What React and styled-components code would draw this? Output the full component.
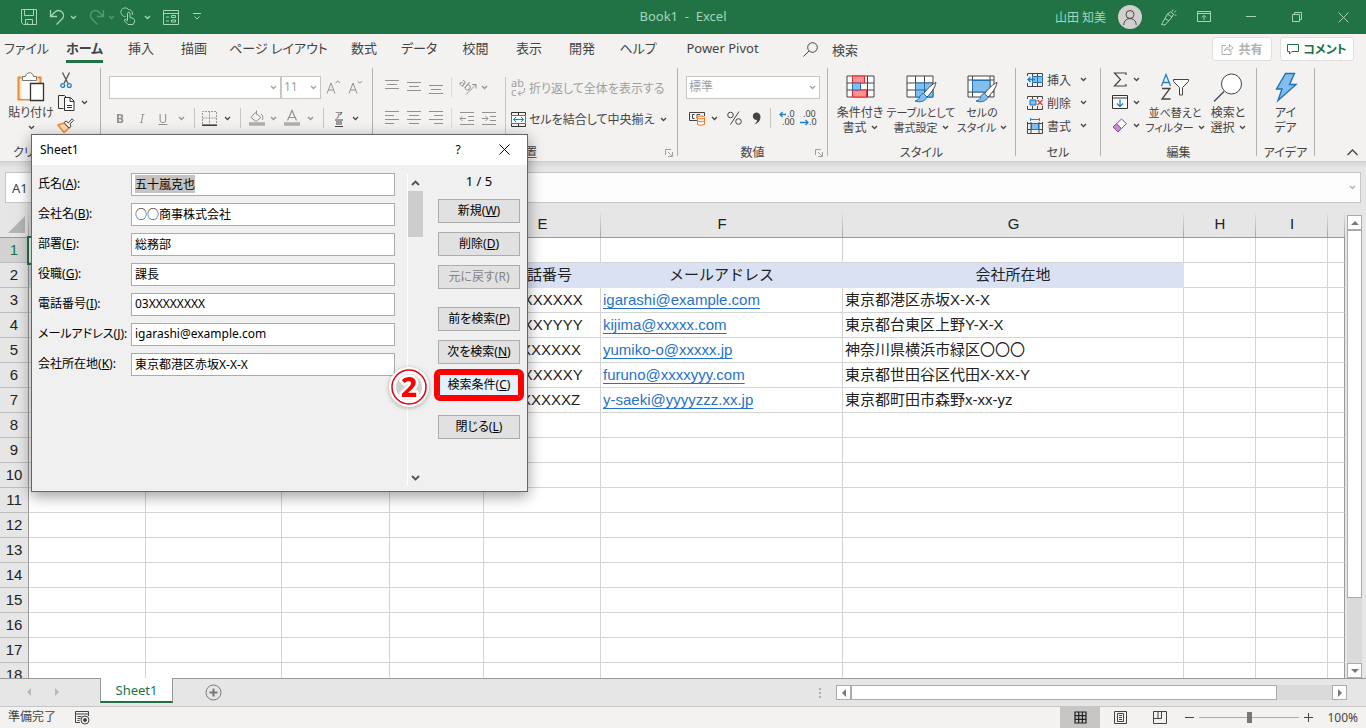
import { useEffect, useRef } from 'react'
import styled, { createGlobalStyle } from 'styled-components'

const GlobalStyle = createGlobalStyle`
  *, *::before, *::after { box-sizing: border-box; }
  body {
    margin: 0;
    overflow: hidden;
    font-family: "Noto Sans", "Noto Sans CJK JP", sans-serif;
    font-feature-settings: "palt";
    font-size: 12px;
    color: #444;
  }
  button, input, select {
    font: inherit;
    font-feature-settings: inherit;
    color: inherit;
  }
  button {
    padding: 0;
    border: 0;
    background: none;
  }
  svg { display: block; flex: none; overflow: visible; }
`

const Window = styled.div`
  position: relative;
  display: flex;
  flex-direction: column;
  height: 100vh;
  background: #e6e6e6;
`

/* ---------- title bar ---------- */

const TitleBar = styled.header`
  display: grid;
  grid-template-columns: 1fr auto 1fr;
  align-items: center;
  height: 34px;
  background: #217346;
  color: #a6d5ba;
`
const QuickAccess = styled.div`
  display: flex;
  align-items: center;
  padding-left: 14px;
`
const WindowTitle = styled.div`
  padding-bottom: 2px;
  font-size: 13px;
  line-height: 30px;
  white-space: pre;
`
const Account = styled.div`
  display: flex;
  align-items: center;
  justify-content: flex-end;
`
const UserName = styled.span`
  margin-right: 12px;
`
const Avatar = styled.span`
  display: flex;
  align-items: center;
  justify-content: center;
  width: 24px;
  height: 24px;
  margin-right: 14px;
  border-radius: 50%;
  background: #d2d0ce;
  color: #444;
`
const Slot = styled.button`
  display: flex;
  flex: none;
  align-items: center;
  justify-content: center;
  width: ${props => props.$w}px;
  height: 24px;
  margin-left: ${props => props.$ml || 0}px;
  opacity: ${props => (props.$dim ? 0.4 : 1)};
`

/* ---------- tabs ---------- */

const TabRow = styled.nav`
  display: flex;
  align-items: center;
  height: 32px;
  padding-bottom: 2px;
  background: #f3f2f1;
  font-size: 13px;
`
const Tab = styled.button`
  flex: none;
  width: ${props => props.$w}px;
  height: 28px;
  white-space: nowrap;
  font-weight: ${props => (props.$active ? 700 : 400)};
  span {
    display: inline-block;
    height: 28px;
    line-height: 27px;
    border-bottom: 3px solid ${props => (props.$active ? '#217346' : 'transparent')};
  }
`
const SearchTab = styled.button`
  display: flex;
  align-items: center;
  gap: 14px;
  margin-left: 22px;
`
const TabActions = styled.div`
  display: flex;
  gap: 8px;
  margin-left: auto;
  padding-right: 12px;
`
const ActionButton = styled.button`
  display: flex;
  align-items: center;
  justify-content: center;
  gap: 4px;
  width: ${props => props.$w}px;
  height: 24px;
  border: 1px solid #e1dfdd;
  border-radius: 3px;
  background: #fff;
  color: ${props => props.$color};
  font-size: 12px;
  font-weight: 700;
`

/* ---------- ribbon ---------- */

const Ribbon = styled.section`
  display: flex;
  height: 96px;
  padding: 2px 0 5px;
  border-bottom: 1px solid #d2d0ce;
  background: #f3f2f1;
`
const Group = styled.div`
  display: flex;
  flex-direction: column;
  flex: none;
  width: ${props => props.$w}px;
  border-right: 1px solid #b3b0ad;
`
const GroupBody = styled.div`
  display: flex;
  flex: 1;
  min-height: 0;
  padding: 0 0 0 ${props => props.$pl || 0}px;
`
const GroupLabel = styled.div`
  position: relative;
  height: 10px;
  line-height: 14px;
  text-align: center;
  white-space: nowrap;
  svg {
    position: absolute;
    right: 4px;
    top: 3px;
  }
`
const Collapse = styled.button`
  margin: auto 8px 0 auto;
`
const Stack = styled.div`
  display: flex;
  flex-direction: column;
  padding-top: ${props => props.$pt || 0}px;
`
const ToolRow = styled.div`
  display: flex;
  align-items: center;
  height: ${props => props.$h || 32}px;
  opacity: ${props => (props.$dim ? 0.55 : 1)};
`
const Split = styled.i`
  align-self: center;
  flex: none;
  width: 1px;
  height: ${props => props.$h || 20}px;
  margin: 0 ${props => props.$m}px;
  background: #c8c6c4;
`
const Combo = styled.div`
  display: flex;
  align-items: center;
  width: ${props => props.$w}px;
  height: 23px;
  padding: 0 3px 0 2px;
  border: 1px solid #c8c6c4;
  background: #fff;
  color: #a19f9d;
  select {
    flex: 1;
    min-width: 0;
    padding: 0;
    border: 0;
    background: none;
    appearance: none;
    font-size: 12px;
    line-height: 20px;
  }
`
const TextTool = styled.button`
  display: flex;
  align-items: center;
  gap: 3px;
  height: ${props => props.$h || 23}px;
  white-space: nowrap;
  color: ${props => (props.$off ? '#a19f9d' : 'inherit')};
  > span { width: ${props => (props.$tw ? props.$tw + 'px' : 'auto')}; text-align: left; }
`
const BigTool = styled.button`
  display: flex;
  flex-direction: column;
  align-items: center;
  flex: none;
  width: ${props => props.$w}px;
  height: 76px;
  padding-top: 2px;
  line-height: 15px;
  white-space: nowrap;
  font-size: ${props => (props.$small ? 11 : 12)}px;
  > svg { height: 34px; margin-bottom: 1px; }
`
const LabelLine = styled.span`
  display: flex;
  align-items: center;
  gap: 4px;
  height: 15px;
`

/* ---------- formula bar ---------- */

const FormulaBar = styled.div`
  display: flex;
  gap: 80px;
  height: 49px;
  padding: 10px 5px 8px;
  background: linear-gradient(#d6d6d6, #e6e6e6 6px);
`
const NameBox = styled.input`
  width: 110px;
  padding: 0 6px;
  border: 1px solid #c6c6c6;
  background: #fff;
  font-size: 13px;
  outline: 0;
`
const FormulaField = styled.div`
  display: flex;
  flex: 1;
  align-items: center;
  padding-right: 4px;
  border: 1px solid #c6c6c6;
  background: #fdfdfd;
  color: #b0b0b0;
  input {
    flex: 1;
    border: 0;
    background: none;
    outline: 0;
  }
`

/* ---------- sheet ---------- */

const SheetArea = styled.main`
  display: flex;
  flex: 1;
  min-height: 0;
`
const GridBox = styled.div`
  flex: 1;
  min-width: 0;
  overflow: hidden;
`
const Grid = styled.table`
  width: 100%;
  table-layout: fixed;
  border-spacing: 0;
  font-family: "Liberation Sans", "Noto Sans CJK JP", sans-serif;
  font-feature-settings: normal;
  font-size: 15px;
  line-height: 20px;
  color: #222;
`
const ColHead = styled.th`
  height: 27px;
  padding: 0;
  border-bottom: 1px solid #999;
  background: linear-gradient(#e6e6e6, #a6a6a6) right / 1px 100% no-repeat #e6e6e6;
  font-weight: 400;
  svg { margin-left: 8px; }
`
const RowHead = styled.th`
  height: 25px;
  padding: 0;
  border-right: 1px solid #999;
  border-bottom: 1px solid #bdbdbd;
  background: ${props => (props.$active ? '#d2d2d2' : '#e6e6e6')};
  color: ${props => (props.$active ? '#217346' : '#222')};
  font-weight: 400;
`
const Cell = styled.td`
  height: 25px;
  padding: 0 2px;
  border-right: 1px solid ${props => (props.$head ? '#d9e1f2' : '#d4d4d4')};
  border-bottom: 1px solid ${props => (props.$head ? '#d9e1f2' : '#d4d4d4')};
  background: ${props => (props.$head ? '#d9e1f2' : '#fff')};
  text-align: ${props => (props.$head ? 'center' : 'left')};
  outline: ${props => (props.$selected ? '2px solid #217346' : '0')};
  white-space: nowrap;
  overflow: hidden;
  &:last-child { border-right-color: #999; }
  a {
    color: #2672c8;
    text-underline-offset: 3px;
    text-decoration-skip-ink: none;
  }
`
const VScroll = styled.div`
  display: flex;
  flex-direction: column;
  width: 21px;
  padding: 4px 4px 0 2px;
`
const HScroll = styled.div`
  display: flex;
  width: 511px;
  height: 15px;
  margin: 6px 19px 0 15px;
`
const ScrollButton = styled.button`
  display: flex;
  flex: none;
  align-items: center;
  justify-content: center;
  width: 15px;
  height: 15px;
  border: 1px solid #ababab;
  background: #fff;
  color: #777;
`
const Track = styled.div`
  display: flex;
  flex: 1;
  flex-direction: ${props => (props.$row ? 'row' : 'column')};
  background: #dadada;
`
const Thumb = styled.div`
  flex: 0 0 ${props => props.$size};
  border: 1px solid #ababab;
  background: #fff;
`

/* ---------- bottom bars ---------- */

const SheetTabs = styled.div`
  display: flex;
  flex: none;
  height: 28px;
  border-top: 1px solid #999;
  color: #b8b8b8;
`
const TabArrows = styled.div`
  display: flex;
  align-items: center;
  gap: 20px;
  width: 100px;
  padding: 0 0 2px 26px;
`
const SheetTab = styled.button`
  width: 73px;
  height: 25px;
  margin-top: -1px;
  border: solid #999;
  border-width: 0 1px;
  border-bottom: 2px solid #217346;
  background: #fff;
  color: #217346;
  font-size: 13px;
  line-height: 24px;
`
const AddSheet = styled.button`
  margin-left: 32px;
  color: #777;
`
const Grip = styled.span`
  display: flex;
  flex-direction: column;
  justify-content: center;
  gap: 2px;
  margin-left: auto;
  i {
    width: 2px;
    height: 2px;
    background: #b0b0b0;
  }
`
const StatusBar = styled.footer`
  display: flex;
  flex: none;
  align-items: center;
  height: 22px;
  padding: 0 8px;
  border-top: 1px solid #c6c6c6;
  background: #f3f2f1;
  > span { line-height: 18px; padding-bottom: 2px; }
  > svg { margin-left: 19px; }
`
const Views = styled.div`
  display: flex;
  margin-left: auto;
`
const ViewButton = styled.button`
  display: flex;
  align-items: center;
  justify-content: center;
  width: 40px;
  height: 21px;
  background: ${props => (props.$active ? '#c8c6c4' : 'none')};
`
const Zoom = styled.div`
  display: flex;
  align-items: center;
  gap: 5px;
  padding-left: 5px;
  input {
    width: 100px;
    height: 12px;
    margin: 0;
    appearance: none;
    background: linear-gradient(#ababab, #ababab) center / 100% 1px no-repeat;
  }
  input::-webkit-slider-thumb {
    appearance: none;
    width: 5px;
    height: 11px;
    background: #777;
  }
  output {
    width: 34px;
    margin-left: 6px;
    text-align: right;
  }
`

/* ---------- data form dialog ---------- */

const Dialog = styled.div`
  position: absolute;
  left: 31px;
  top: 134px;
  display: flex;
  flex-direction: column;
  width: 497px;
  height: 358px;
  border: 1px solid #666;
  background: #f0f0f0;
  color: #000;
  box-shadow: 0 4px 14px rgba(0, 0, 0, 0.4);
`
const DialogTitle = styled.div`
  display: flex;
  align-items: center;
  height: 30px;
  padding: 0 0 2px 8px;
  background: #fff;
  span { margin-right: auto; }
  button { width: 46px; height: 28px; display: grid; place-items: center; }
`
const DialogBody = styled.div`
  display: flex;
  flex: 1;
  min-height: 0;
  padding: 8px 7px 5px 6px;
`
const Fields = styled.form`
  display: flex;
  flex-direction: column;
  gap: 7px;
  width: 357px;
`
const Field = styled.div`
  display: flex;
  height: 23px;
  label {
    width: 93px;
    line-height: 21px;
    white-space: nowrap;
  }
  input {
    flex: 1;
    min-width: 0;
    padding: 0 3px 2px;
    border: 1px solid #ababab;
    border-radius: 0;
    background: #fff;
    outline: 0;
  }
  input::selection {
    background: #c4c4c4;
    color: #000;
  }
`
const RecordScroll = styled.div`
  display: flex;
  flex-direction: column;
  width: 16px;
  margin: 1px 15px 0 12px;
  border-left: 1px solid #fff;
  color: #505050;
  button { height: 17px; display: grid; place-items: center; }
  i { height: 46px; background: #cdcdcd; }
  button:last-child { margin-top: auto; }
`
const Commands = styled.div`
  display: flex;
  flex-direction: column;
  gap: 9px;
  width: 82px;
`
const Counter = styled.div`
  height: 17px;
  font-size: 13px;
  line-height: 17px;
  text-align: center;
`
const Command = styled.button`
  flex: none;
  height: 24px;
  margin-top: ${props => (props.$spaced ? 9 : 0)}px;
  padding-bottom: 2px;
  border: 1px solid #adadad;
  background: #e1e1e1;
  color: ${props => (props.disabled ? '#838383' : '#000')};
  white-space: nowrap;
  ${props => props.$marked && `
    border: 2px solid #f00;
    background: #e5f1fb;
    outline: 4px solid #f00;
    border-radius: 2px;
  `}
`
const StepBadge = styled.svg`
  position: absolute;
  left: 355px;
  top: 230px;
  filter: drop-shadow(0 1px 2px rgba(0, 0, 0, 0.3));
`

/* ---------- icons ---------- */

const Icon = ({ w = 16, h = 16, children }) => (
  <svg width={w} height={h} viewBox={`0 0 ${w} ${h}`} fill="none" stroke="currentColor" aria-hidden="true">
    {children}
  </svg>
)
const Chevron = () => <Icon w={7} h={5}><path d="M1 1l2.5 2.5L6 1" strokeWidth="1.3" /></Icon>
const Lines = ({ rows, h = 14 }) => (
  <Icon w={14} h={h}>
    {rows.map(([x1, x2, y]) => <path key={y} d={`M${x1} ${y}.5H${x2}`} />)}
  </Icon>
)
const Arrow = ({ d }) => <Icon w={8} h={8}><path d={d} fill="currentColor" stroke="none" /></Icon>

const SaveIcon = () => (
  <Icon><path d="M.5.5h15v15h-13l-2-2zM3.5.5v6h9v-6M4.5 15.5v-5h7v5M6.5 15.5v-2" /></Icon>
)
const UndoIcon = () => (
  <Icon><path d="M1.500 1v6.500h6.500M1.500 7.500L6 3c2-2 5-2 7 0s2 5 0 7l-5.500 5.500" strokeWidth="1.300" /></Icon>
)
const RedoIcon = () => (
  <Icon><path d="M14.500 1v6.500H8M14.500 7.500L10 3c-2-2-5-2-7 0s-2 5 0 7l5.500 5.500" strokeWidth="1.300" /></Icon>
)
const TouchIcon = () => (
  <Icon w={12} h={16}>
    <path d="M4.500 11.500V4.500a1.200 1.200 0 012.500 0V8.500l3 .8c1 .3 1.500 1 1.500 2V13l-1.500 2.500H5L1.500 12c-.8-1 .5-2.200 1.500-1.300l1.500 1.300M2.500 7.500A4.300 4.300 0 115.700.700c2.500 0 4.500 2.500 3.500 5.300" />
  </Icon>
)
const FormIcon = () => (
  <Icon h={15}><path d="M.5.5h15v14H.5zM.5 3.500h15M3 7h3M3 11h3M8.500 5.500h4v2h-4zM8.500 10h4v2h-4z" /></Icon>
)
const PersonIcon = () => (
  <Icon w={14} h={15}><circle cx="7" cy="4.500" r="4" /><path d="M.8 15c0-8.500 12.400-8.500 12.400 0" /></Icon>
)
const PenIcon = () => (
  <Icon w={17} h={17}><path d="M1.500 15.500l6-10.500 4.500 3-7 8zM7.500 5l3-2 3 2-1.500 3M5 9.500l4 2.500M12 2.500l.8-2M14 3.500l2-2M14.500 6h2" /></Icon>
)
const DisplayIcon = () => <Icon w={14} h={12}><path d="M.5.5h13v10H.5zM.5 2.500h13M7 9V4.500M4.800 6.500L7 4.300l2.200 2.200" /></Icon>
const SearchIcon = () => (
  <Icon w={15} h={15}><circle cx="9.500" cy="5.500" r="4.800" /><path d="M6 9L.5 14.500" /></Icon>
)
const ShareIcon = () => <Icon w={13} h={12}><path d="M5 2.500H1v9h9V8M3.500 8c.5-3 2.500-4 5-4V1.500L12 5 8.500 8V6C6.500 6 5 6.500 3.500 8z" /></Icon>
const CommentIcon = () => <Icon w={12} h={11}><path d="M.5.5h11v7H5l-2.500 2.500V7.500h-2z" /></Icon>

const PasteIcon = () => (
  <Icon w={28} h={34}>
    <path d="M4.500 7.500h-3v22h22v-22h-3" stroke="#ee8a2c" strokeWidth="2" fill="#fbe2c4" />
    <path d="M5 9h15v20H4z" fill="#fafafa" stroke="none" />
    <path d="M5.500 10.500v-4h3c.5-5 7.500-5 8 0h3v4z" fill="#fff" stroke="#777" />
    <path d="M13.500 13.500h13v17h-13z" fill="#fff" stroke="#333" strokeWidth="1.300" />
  </Icon>
)
const CutIcon = () => (
  <Icon w={12} h={16}>
    <path d="M2.500.5l5.500 11M9.500.5L4 11.500" stroke="#555" strokeWidth="1.300" />
    <circle cx="2.700" cy="13.500" r="1.900" stroke="#1e82c8" strokeWidth="1.300" />
    <circle cx="9.300" cy="13.500" r="1.900" stroke="#1e82c8" strokeWidth="1.300" />
  </Icon>
)
const CopyIcon = () => (
  <Icon w={17} h={16}>
    <path d="M5.500 13.500h-5V.5h6l2 2" stroke="#333" />
    <path d="M6.500 2.500h6l3.500 3.500v9.500H6.500zM12 3v3.500h4M9 10.500h5M9 12.500h5" stroke="#333" fill="#fff" />
  </Icon>
)
const BrushIcon = () => (
  <Icon w={18} h={15}>
    <path d="M1 7l6-2 5 5-5 4.500z" fill="#fbd9b5" stroke="#ee8a2c" strokeWidth="1.500" />
    <path d="M7 4.500l2-1.500 2.500 2L15 .8l1.500 1.500L13 6l1 2.500-2 1.500z" fill="#fff" stroke="#444" />
  </Icon>
)
const BorderIcon = () => (
  <Icon w={15} h={15}><path d="M.5 13V.5h14V13M7.500.5V13M.5 7h14" stroke="#999" strokeDasharray="2 1" /><path d="M0 14.200h15" stroke="#333" strokeWidth="1.500" /></Icon>
)
const FillIcon = () => (
  <Icon w={16} h={16}><path d="M7.500.5v4M6 2.500l6 5-5 4-5-4 4-5M12 4c2 1 2 3 1.500 6" /><path d="M0 14h16" strokeWidth="3.500" stroke="#777" /></Icon>
)
const FontColorIcon = () => (
  <Icon w={16} h={16}><path d="M3.500 10.500L8 .5l4.500 10M5 7.500h6" strokeWidth="1.200" /><path d="M0 14h16" strokeWidth="3.500" stroke="#777" /></Icon>
)
const SmallText = styled.text`
  font-size: ${props => props.$s || 9}px;
  fill: ${props => props.$c || 'currentColor'};
  stroke: none;
`
const OrientIcon = () => (
  <Icon w={17} h={15}>
    <SmallText x="-1" y="8" $s={11} transform="rotate(40 5 5)">ab</SmallText>
    <path d="M6 14.500l10-10M12 4.500h4v4" />
  </Icon>
)
const IndentIcon = ({ out }) => (
  <Icon w={14} h={13}><path d={`M0 .5h14M8 4.500h6M8 8.500h6M0 12.500h14M0 6.500h6${out ? 'M2.500 4L0 6.500 2.500 9' : 'M3.500 4L6 6.500 3.500 9'}`} /></Icon>
)
const WrapIcon = () => (
  <Icon w={15} h={17}>
    <SmallText x="0" y="7" $s={11}>ab</SmallText><SmallText x="0" y="16" $s={11}>c</SmallText>
    <path d="M13.500 8v2.500q0 3-6 3M9.500 11L7 13.500 9.500 16" />
  </Icon>
)
const MergeIcon = () => (
  <Icon w={15} h={15}>
    <path d="M.5 3V.5h14V3M7.500.5V3M.5 12v2.500h14V12M7.500 12v2.500" stroke="#333" />
    <path d="M.5 3.500h14v8H.5z" fill="#fff" stroke="#1e82c8" /><path d="M2.500 7.500h10M5 5L2.500 7.500 5 10M10 5l2.500 2.500L10 10" stroke="#1e82c8" />
  </Icon>
)
const MoneyIcon = () => (
  <Icon w={17} h={15}>
    <path d="M8 9.500H.5v-8h15V5M5.500 3.500h-2v4h2M8 7.500v-4h3" stroke="#444" />
    <path d="M8.500 6.500v7q3.500 1.500 7 0v-7" fill="#fff" stroke="#ee7a1c" /><ellipse cx="12" cy="6.500" rx="3.500" ry="1.500" fill="#fbe2c4" stroke="#ee7a1c" />
    <path d="M8.500 10q3.500 1.500 7 0" stroke="#ee7a1c" />
  </Icon>
)
const DecimalIcon = ({ more }) => (
  <Icon w={17} h={16}>
    <SmallText x={more ? 8 : 3} y="7" $s={9}>{more ? '.0' : '.00'}</SmallText>
    <SmallText x={more ? 3 : 9} y="15" $s={9}>{more ? '.00' : '.0'}</SmallText>
    <path d={more ? 'M7 4.500H.8M3.500 2L1 4.500 3.500 7' : 'M0 12.500h8M5.500 10L8 12.500 5.500 15'} stroke="#1e82c8" strokeWidth="1.300" />
  </Icon>
)
const CondIcon = () => (
  <Icon w={29} h={34}>
    <path d="M1 6h27v21H1zM1 13h27M1 20h27M6.500 6v21M14.500 6v21M21.500 6v21" fill="#fff" stroke="#444" />
    <path d="M6.500 6h12v7h-12zM6.500 20h14v7h-14z" fill="#ff8f8f" stroke="#e02828" /><path d="M6.500 13h8v7h-8z" fill="#83beec" stroke="#1e72b8" />
  </Icon>
)
const PaintBrush = () => (
  <>
    <path d="M30 12.500c-3 1-9 6-12.500 11.500l3.500 3c4-4 8-9 9-14.500z" fill="#fff" stroke="#444" />
    <path d="M17.500 23.500c-3 0-3.500 2.500-4.500 5-1 1.500-3 2.500-4 2.500 4 1.500 10 1 12-4z" fill="#83beec" stroke="#1e72b8" />
  </>
)
const TableIcon = () => (
  <Icon w={31} h={34}>
    <path d="M1 6h26v21H1zM1 13h26M1 20h26M9.500 6v21M18.500 6v21" fill="#fff" stroke="#444" />
    <path d="M9.500 13H27v14H9.500zM9.500 20H27M18.500 13v14" fill="#83beec" stroke="#1e72b8" /><PaintBrush />
  </Icon>
)
const CellStyleIcon = () => (
  <Icon w={31} h={34}>
    <path d="M1 6h26v21H1zM1 10h26M1 22h26M5.500 6v21M23 6v21" fill="#fff" stroke="#444" />
    <path d="M5.500 10.500H23V22H5.500z" fill="#83beec" stroke="#1e72b8" /><PaintBrush />
  </Icon>
)
const RowsIcon = ({ kind }) => (
  <Icon w={17} h={16}>
    {kind !== 'format' && <path d="M.5 4V1.500h15V4M5.500 1.500V4M10.500 1.500V4M.5 11v3.500h15V11M5.500 11v3.500M10.500 11v3.500" stroke="#444" />}
    {kind === 'insert' && <><path d="M5.500 4.500h10v6h-10zM10.500 4.500v6" fill="#83beec" stroke="#1e72b8" /><path d="M8 7.500H.8M3.500 5L1 7.500 3.500 10" stroke="#1e82c8" strokeWidth="1.300" /></>}
    {kind === 'delete' && <><path d="M3 5h6v5H3z" fill="#83beec" stroke="#1e72b8" /><path d="M10.500 5l5 5M15.500 5l-5 5" stroke="#e84040" strokeWidth="1.500" /></>}
    {kind === 'format' && <><path d="M.5 4v11.500h15V4M.5 11.500h15M.5 5.500h15M4 4v11.500M12 4v11.500" stroke="#444" /><path d="M4.500 5.500h7v6h-7z" fill="#83beec" stroke="#1e72b8" /><path d="M3.500 0v3M12.500 0v3M3.500 1.500h9" stroke="#1e82c8" /></>}
  </Icon>
)
const SumIcon = () => <Icon w={15} h={15}><path d="M13 3V1H1.500l6 6.500-6 6.500H13v-2" strokeWidth="1.200" /></Icon>
const FillDownIcon = () => (
  <Icon w={17} h={15}><path d="M.5.500h15v13H.5zM.5 3h15" stroke="#333" fill="#fff" /><path d="M8 4.500v7M5 8.500l3 3 3-3" stroke="#1e82c8" strokeWidth="1.300" /></Icon>
)
const EraserIcon = () => (
  <Icon w={16} h={15}><path d="M1 9l8.500-8L14.500 5.500 6 14z" fill="#fff" stroke="#9b3fae" /><path d="M1 9l3.500-3.300L9.500 10.500 6 14z" fill="#c88ad6" stroke="#9b3fae" /></Icon>
)
const SortIcon = () => (
  <Icon w={30} h={34}>
    <path d="M1.500 16L6 4.500 10.500 16M3 12.500h6" stroke="#1e82c8" strokeWidth="1.300" />
    <path d="M2 18.500h8L2 29h8.500" strokeWidth="1.300" />
    <path d="M13.500 9.500h15v2l-6 6V25h-3v-7.500l-6-6z" fill="#fff" />
  </Icon>
)
const FindIcon = () => (
  <Icon w={30} h={34}><circle cx="18.500" cy="14" r="10" fill="#fff" /><path d="M11 21.500L1 31.500" strokeWidth="1.300" /></Icon>
)
const IdeaIcon = () => (
  <Icon w={24} h={34}><path d="M11.500 3.500h9l-5 11H22L4 30.500l4-11.500H2.500z" fill="#83beec" stroke="#1e72b8" strokeWidth="1.400" /></Icon>
)
const LauncherIcon = () => <Icon w={8} h={8}><path d="M.5 6V.5H6M3 3l4 4M7.500 3v4.500H3" stroke="#a19f9d" /></Icon>
const CloseIcon = () => <Icon w={11} h={11}><path d="M.5.500l10 10M10.500.500l-10 10" /></Icon>

/* ---------- data ---------- */

const tabs = [
  ['ファイル', 53], ['ホーム', 63], ['挿入', 50], ['描画', 56], ['ページ レイアウト', 113], ['数式', 58],
  ['データ', 52], ['校閲', 61], ['表示', 46], ['開発', 60], ['ヘルプ', 52], ['Power Pivot', 117],
]
const columns = [
  ['A', 117], ['B', 136], ['C', 108], ['D', 94], ['E', 117], ['F', 242], ['G', 341], ['H', 72], ['I', 72], ['', 0],
]
const records = {
  2: ['', '氏名', '会社名', '部署', '電話番号', 'メールアドレス', '会社所在地'],
  3: ['', '', '', '', '03XXXXXXXX', 'igarashi@example.com', '東京都港区赤坂X-X-X'],
  4: ['', '', '', '', '03XXXXYYYY', 'kijima@xxxxx.com', '東京都台東区上野Y-X-X'],
  5: ['', '', '', '', '045XXXXXXX', 'yumiko-o@xxxxx.jp', '神奈川県横浜市緑区〇〇〇'],
  6: ['', '', '', '', '03XXXXXXXY', 'furuno@xxxxyyy.com', '東京都世田谷区代田X-XX-Y'],
  7: ['', '', '', '', '042XXXXXXZ', 'y-saeki@yyyyzzz.xx.jp', '東京都町田市森野x-xx-yz'],
}
const fields = [
  ['氏名', 'A', '五十嵐克也'],
  ['会社名', 'B', '○○商事株式会社'],
  ['部署', 'E', '総務部'],
  ['役職', 'G', '課長'],
  ['電話番号', 'I', '03XXXXXXXX'],
  ['メールアドレス', 'J', 'igarashi@example.com'],
  ['会社所在地', 'K', '東京都港区赤坂X-X-X'],
]
const commands = [
  { text: '新規', k: 'W' },
  { text: '削除', k: 'D' },
  { text: '元に戻す', k: 'R', off: true },
  { text: '前を検索', k: 'P', spaced: true },
  { text: '次を検索', k: 'N' },
  { text: '検索条件', k: 'C', marked: true },
  { text: '閉じる', k: 'L', spaced: true },
]

/* ---------- parts ---------- */

function Title() {
  return (
    <TitleBar>
      <QuickAccess>
        <Slot $w={30}><SaveIcon /></Slot>
        <Slot $w={26}><UndoIcon /></Slot>
        <Slot $w={6}><Chevron /></Slot>
        <Slot $w={22} $ml={10} $dim><RedoIcon /></Slot>
        <Slot $w={6} $dim><Chevron /></Slot>
        <Slot $w={22} $ml={4}><TouchIcon /></Slot>
        <Slot $w={6} $ml={4}><Chevron /></Slot>
        <Slot $w={22} $ml={10}><FormIcon /></Slot>
        <Slot $w={10} $ml={10}><Icon w={8} h={8}><path d="M0 .5h8M1.500 3.500L4 6l2.500-2.500" /></Icon></Slot>
      </QuickAccess>
      <WindowTitle>Book1  -  Excel</WindowTitle>
      <Account>
        <UserName>山田 知美</UserName>
        <Avatar><PersonIcon /></Avatar>
        <Slot $w={24}><PenIcon /></Slot>
        <Slot $w={48}><DisplayIcon /></Slot>
        <Slot $w={46}><Icon w={10} h={2}><path d="M0 .5h10" /></Icon></Slot>
        <Slot $w={46}><Icon w={10} h={10}><path d="M.5 2.500h7v7h-7zM2.500 2.500v-2h7v7h-2" /></Icon></Slot>
        <Slot $w={46}><CloseIcon /></Slot>
      </Account>
    </TitleBar>
  )
}

function Tabs() {
  return (
    <TabRow>
      {tabs.map(([name, w]) => (
        <Tab key={name} $w={w} $active={name === 'ホーム'}><span>{name}</span></Tab>
      ))}
      <SearchTab><SearchIcon />検索</SearchTab>
      <TabActions>
        <ActionButton $w={60} $color="#b3b0ad" disabled><ShareIcon />共有</ActionButton>
        <ActionButton $w={74} $color="#217346"><CommentIcon />コメント</ActionButton>
      </TabActions>
    </TabRow>
  )
}

function Big({ w, icon, lines, arrow, small }) {
  return (
    <BigTool $w={w} $small={small}>
      {icon}
      <LabelLine>{lines[0]}</LabelLine>
      <LabelLine>{lines[1]}{arrow && <Chevron />}</LabelLine>
    </BigTool>
  )
}

function RibbonBar() {
  return (
    <Ribbon>
      <Group $w={101}>
        <GroupBody $pl={6}>
          <Big w={50} icon={<PasteIcon />} lines={['貼り付け', '']} arrow />
          <Stack>
            <ToolRow $h={23}><Slot $w={20}><CutIcon /></Slot></ToolRow>
            <ToolRow $h={23}><Slot $w={20}><CopyIcon /></Slot><Slot $w={16}><Chevron /></Slot></ToolRow>
            <ToolRow $h={23}><Slot $w={20}><BrushIcon /></Slot></ToolRow>
          </Stack>
        </GroupBody>
        <GroupLabel>クリップボード</GroupLabel>
      </Group>

      <Group $w={272}>
        <GroupBody $pl={8}>
          <Stack $pt={3}>
            <ToolRow>
              <Combo $w={172}><select aria-label="フォント"><option></option></select><Chevron /></Combo>
              <Combo $w={40}><select aria-label="サイズ"><option>11</option></select><Chevron /></Combo>
              <ToolRow $dim>
                <Slot $w={24}><Icon w={14} h={14}><path d="M1 13.500L5 3l4 10.500M2.500 10h5M9.500 3L12 .800 14 3" /></Icon></Slot>
                <Slot $w={20}><Icon w={14} h={14}><path d="M1 13.500L5 3l4 10.500M2.500 10h5M9.500 1L12 3.200 14 1" /></Icon></Slot>
              </ToolRow>
            </ToolRow>
            <ToolRow $h={30}>
              <ToolRow $dim>
                <Slot $w={22}><b>B</b></Slot>
                <Slot $w={22}><em>I</em></Slot>
                <Slot $w={20}><u>U</u></Slot>
                <Slot $w={16}><Chevron /></Slot>
              </ToolRow>
              <Split $m={5} />
              <Slot $w={19}><BorderIcon /></Slot>
              <Slot $w={16}><Chevron /></Slot>
              <Split $m={5} />
              <ToolRow $dim>
                <Slot $w={21}><FillIcon /></Slot>
                <Slot $w={12}><Chevron /></Slot>
                <Slot $w={26}><FontColorIcon /></Slot>
                <Slot $w={10}><Chevron /></Slot>
              </ToolRow>
              <Split $m={8} />
              <Slot $w={14}>
                <Icon w={10} h={17}>
                  <SmallText x="1" y="8" $s={8}>ア</SmallText>
                  <path d="M1 10h8M2 12h6M2 14h6M1 16.500h8" strokeWidth="1.200" />
                </Icon>
              </Slot>
              <Slot $w={18}><Chevron /></Slot>
            </ToolRow>
          </Stack>
        </GroupBody>
        <GroupLabel>フォント</GroupLabel>
      </Group>

      <Group $w={305}>
        <GroupBody $pl={8}>
          <Stack $pt={3}>
            <ToolRow $dim>
              <Slot $w={22}><Lines rows={[[0, 14, 0], [2, 12, 4], [0, 14, 8]]} /></Slot>
              <Slot $w={22}><Lines rows={[[0, 14, 2], [2, 12, 6], [0, 14, 10]]} /></Slot>
              <Slot $w={22}><Lines rows={[[0, 14, 5], [2, 12, 9], [0, 14, 13]]} /></Slot>
              <Split $m={4} />
              <Slot $w={24}><OrientIcon /></Slot>
              <Slot $w={8}><Chevron /></Slot>
            </ToolRow>
            <ToolRow $h={30} $dim>
              <Slot $w={22}><Lines rows={[[0, 14, 0], [0, 9, 4], [0, 14, 8], [0, 9, 12]]} /></Slot>
              <Slot $w={22}><Lines rows={[[0, 14, 0], [2, 12, 4], [0, 14, 8], [2, 12, 12]]} /></Slot>
              <Slot $w={22}><Lines rows={[[0, 14, 0], [5, 14, 4], [0, 14, 8], [5, 14, 12]]} /></Slot>
              <Split $m={4} />
              <Slot $w={22}><IndentIcon out /></Slot>
              <Slot $w={22}><IndentIcon /></Slot>
            </ToolRow>
          </Stack>
          <Split $m={5} $h={60} />
          <Stack $pt={4}>
            <TextTool $h={32} $off><WrapIcon /><span>折り返して全体を表示する</span></TextTool>
            <TextTool $h={30}><MergeIcon /><span>セルを結合して中央揃え</span><Slot as="i" $w={12}><Chevron /></Slot></TextTool>
          </Stack>
        </GroupBody>
        <GroupLabel>配置<LauncherIcon /></GroupLabel>
      </Group>

      <Group $w={150}>
        <GroupBody $pl={8}>
          <Stack $pt={3}>
            <ToolRow>
              <Combo $w={134}><select aria-label="表示形式"><option>標準</option></select><Chevron /></Combo>
            </ToolRow>
            <ToolRow $h={30}>
              <Slot $w={22}><MoneyIcon /></Slot>
              <Slot $w={12}><Chevron /></Slot>
              <Slot $w={28}>
                <Icon w={15} h={14}><circle cx="3.500" cy="4" r="2.800" /><circle cx="11.500" cy="10.500" r="2.800" /><path d="M12 .5L3.500 13.500" /></Icon>
              </Slot>
              <Slot $w={16}>
                <Icon w={9} h={13}><path d="M2 12.500C4 11 5 9.500 5 8 2.500 8 .8 6.500.8 4.300.8 2 2.500.5 4.500.5S8.500 2 8.500 5c0 3.500-2.500 6.500-6.500 7.500z" fill="currentColor" stroke="none" /></Icon>
              </Slot>
              <Split $m={6} />
              <Slot $w={20}><DecimalIcon more /></Slot>
              <Slot $w={22}><DecimalIcon /></Slot>
            </ToolRow>
          </Stack>
        </GroupBody>
        <GroupLabel>数値<LauncherIcon /></GroupLabel>
      </Group>

      <Group $w={188}>
        <GroupBody $pl={4}>
          <Big w={56} icon={<CondIcon />} lines={['条件付き', '書式']} arrow />
          <Big w={66} icon={<TableIcon />} lines={['テーブルとして', '書式設定']} arrow small />
          <Big w={56} icon={<CellStyleIcon />} lines={['セルの', 'スタイル']} arrow small />
        </GroupBody>
        <GroupLabel>スタイル</GroupLabel>
      </Group>

      <Group $w={85}>
        <GroupBody $pl={11}>
          <Stack>
            {[['挿入', 'insert'], ['削除', 'delete'], ['書式', 'format']].map(([name, kind]) => (
              <TextTool key={kind} $tw={30}><RowsIcon kind={kind} /><span>{name}</span><Chevron /></TextTool>
            ))}
          </Stack>
        </GroupBody>
        <GroupLabel>セル</GroupLabel>
      </Group>

      <Group $w={156}>
        <GroupBody $pl={9}>
          <Stack>
            {[SumIcon, FillDownIcon, EraserIcon].map((Part, i) => (
              <ToolRow key={i} $h={23}><Slot $w={20}><Part /></Slot><Slot $w={12}><Chevron /></Slot></ToolRow>
            ))}
          </Stack>
          <Big w={66} icon={<SortIcon />} lines={['並べ替えと', 'フィルター']} arrow small />
          <Big w={40} icon={<FindIcon />} lines={['検索と', '選択']} arrow />
        </GroupBody>
        <GroupLabel>編集</GroupLabel>
      </Group>

      <Group $w={58}>
        <GroupBody>
          <Big w={57} icon={<IdeaIcon />} lines={['アイ', 'デア']} />
        </GroupBody>
        <GroupLabel>アイデア</GroupLabel>
      </Group>
      <Collapse aria-label="リボンを折りたたむ"><Icon w={11} h={7}><path d="M.5 6l5-5 5 5" strokeWidth="1.300" /></Icon></Collapse>
    </Ribbon>
  )
}

function Sheet() {
  const rows = Array.from({ length: 18 }, (_, i) => i + 1)
  return (
    <SheetArea>
      <GridBox>
        <Grid>
          <colgroup>
            <col width="29" />
            {columns.map(([name, w]) => <col key={name} width={w || undefined} />)}
          </colgroup>
          <thead>
            <tr>
              <ColHead><svg width="17" height="17"><path d="M17 0v17H0z" fill="#b4b4b4" /></svg></ColHead>
              {columns.map(([name]) => <ColHead key={name}>{name}</ColHead>)}
            </tr>
          </thead>
          <tbody>
            {rows.map(n => (
              <tr key={n}>
                <RowHead $active={n === 1}>{n}</RowHead>
                {columns.map(([name], i) => {
                  const value = records[n]?.[i]
                  return (
                    <Cell key={name} $head={n === 2 && i < 7} $selected={n === 1 && i === 0}>
                      {n > 2 && i === 5 && value ? <a href={'mailto:' + value}>{value}</a> : value}
                    </Cell>
                  )
                })}
              </tr>
            ))}
          </tbody>
        </Grid>
      </GridBox>
      <VScroll>
        <ScrollButton><Arrow d="M4 2l4 4H0z" /></ScrollButton>
        <Track><Thumb $size="85%" /></Track>
        <ScrollButton><Arrow d="M0 2h8L4 6z" /></ScrollButton>
      </VScroll>
    </SheetArea>
  )
}

function Bottom() {
  return (
    <>
      <SheetTabs>
        <TabArrows><Arrow d="M5 0v8L1 4z" /><Arrow d="M1 0l4 4-4 4z" /></TabArrows>
        <SheetTab>Sheet1</SheetTab>
        <AddSheet aria-label="新しいシート">
          <Icon w={17} h={17}><circle cx="8.500" cy="8.500" r="7.500" /><path d="M8.500 4.500v8M4.500 8.500h8" strokeWidth="2" /></Icon>
        </AddSheet>
        <Grip><i /><i /><i /></Grip>
        <HScroll>
          <ScrollButton><Arrow d="M6 0v8L2 4z" /></ScrollButton>
          <Track $row><Thumb $size="88.5%" /></Track>
          <ScrollButton><Arrow d="M2 0l4 4-4 4z" /></ScrollButton>
        </HScroll>
      </SheetTabs>
      <StatusBar>
        <span>準備完了</span>
        <Icon w={15} h={14}>
          <path d="M5 11.500H.5V.5h13V5M.5 3h13M2.500 5.500h4M2.500 7.500h3M2.500 9.500h2" />
          <circle cx="10" cy="9" r="4" /><circle cx="10" cy="9" r="1.500" fill="currentColor" />
        </Icon>
        <Views>
          <ViewButton $active><Icon w={13} h={13}><path d="M1 1h11v11H1zM1 4.700h11M1 8.400h11M4.700 1v11M8.400 1v11" stroke="#222" strokeWidth="1.200" /></Icon></ViewButton>
          <ViewButton><Icon w={13} h={13}><path d="M.5.500h12v12H.5zM3.500 2.500h6v8h-6zM5 4.500h3M5 6.500h3M5 8.500h3" /></Icon></ViewButton>
          <ViewButton><Icon w={14} h={13}><path d="M.5.500h13v12H.5zM.5 7.500h8M5 .5v7M8.500.5v7" /></Icon></ViewButton>
        </Views>
        <Zoom>
          <Icon w={9} h={9}><path d="M0 4.500h9" /></Icon>
          <input type="range" min="0" max="100" defaultValue="50" aria-label="ズーム" />
          <Icon w={9} h={9}><path d="M0 4.500h9M4.500 0v9" /></Icon>
          <output>100%</output>
        </Zoom>
      </StatusBar>
    </>
  )
}

function DataForm() {
  const first = useRef(null)
  useEffect(() => {
    first.current.focus()
    first.current.select()
  }, [])

  return (
    <Dialog role="dialog" aria-label="Sheet1">
      <DialogTitle>
        <span>Sheet1</span>
        <button>?</button>
        <button aria-label="閉じる"><CloseIcon /></button>
      </DialogTitle>
      <DialogBody>
        <Fields>
          {fields.map(([name, k, value], i) => (
            <Field key={k}>
              <label htmlFor={'field' + k}>{name}(<u>{k}</u>):</label>
              <input id={'field' + k} ref={i === 0 ? first : null} defaultValue={value} />
            </Field>
          ))}
        </Fields>
        <RecordScroll>
          <button aria-label="前のレコード"><Icon w={9} h={6}><path d="M1 5l3.500-3.500L8 5" strokeWidth="1.800" /></Icon></button>
          <i />
          <button aria-label="次のレコード"><Icon w={9} h={6}><path d="M1 1l3.500 3.500L8 1" strokeWidth="1.800" /></Icon></button>
        </RecordScroll>
        <Commands>
          <Counter>1 / 5</Counter>
          {commands.map(c => (
            <Command key={c.k} disabled={c.off} $spaced={c.spaced} $marked={c.marked}>
              {c.text}({c.off ? c.k : <u>{c.k}</u>})
            </Command>
          ))}
        </Commands>
      </DialogBody>
      <StepBadge width="44" height="44" viewBox="0 0 44 44">
        <circle cx="22" cy="22" r="20" fill="#fff" />
        <circle cx="22" cy="22" r="17" fill="#fff" stroke="#e60012" strokeWidth="1.500" />
        <circle cx="22" cy="22" r="13" fill="#d0d0d0" />
        <text
          x="22" y="32" textAnchor="middle" fontSize="28" fontWeight="800"
          fill="#f00" stroke="#fff" strokeWidth="5" strokeLinejoin="round" paintOrder="stroke"
        >2</text>
      </StepBadge>
    </Dialog>
  )
}

export default function App() {
  return (
    <>
      <GlobalStyle />
      <Window>
        <Title />
        <Tabs />
        <RibbonBar />
        <FormulaBar>
          <NameBox aria-label="名前ボックス" defaultValue="A1" />
          <FormulaField><input aria-label="数式" /><Chevron /></FormulaField>
        </FormulaBar>
        <Sheet />
        <Bottom />
        <DataForm />
      </Window>
    </>
  )
}
